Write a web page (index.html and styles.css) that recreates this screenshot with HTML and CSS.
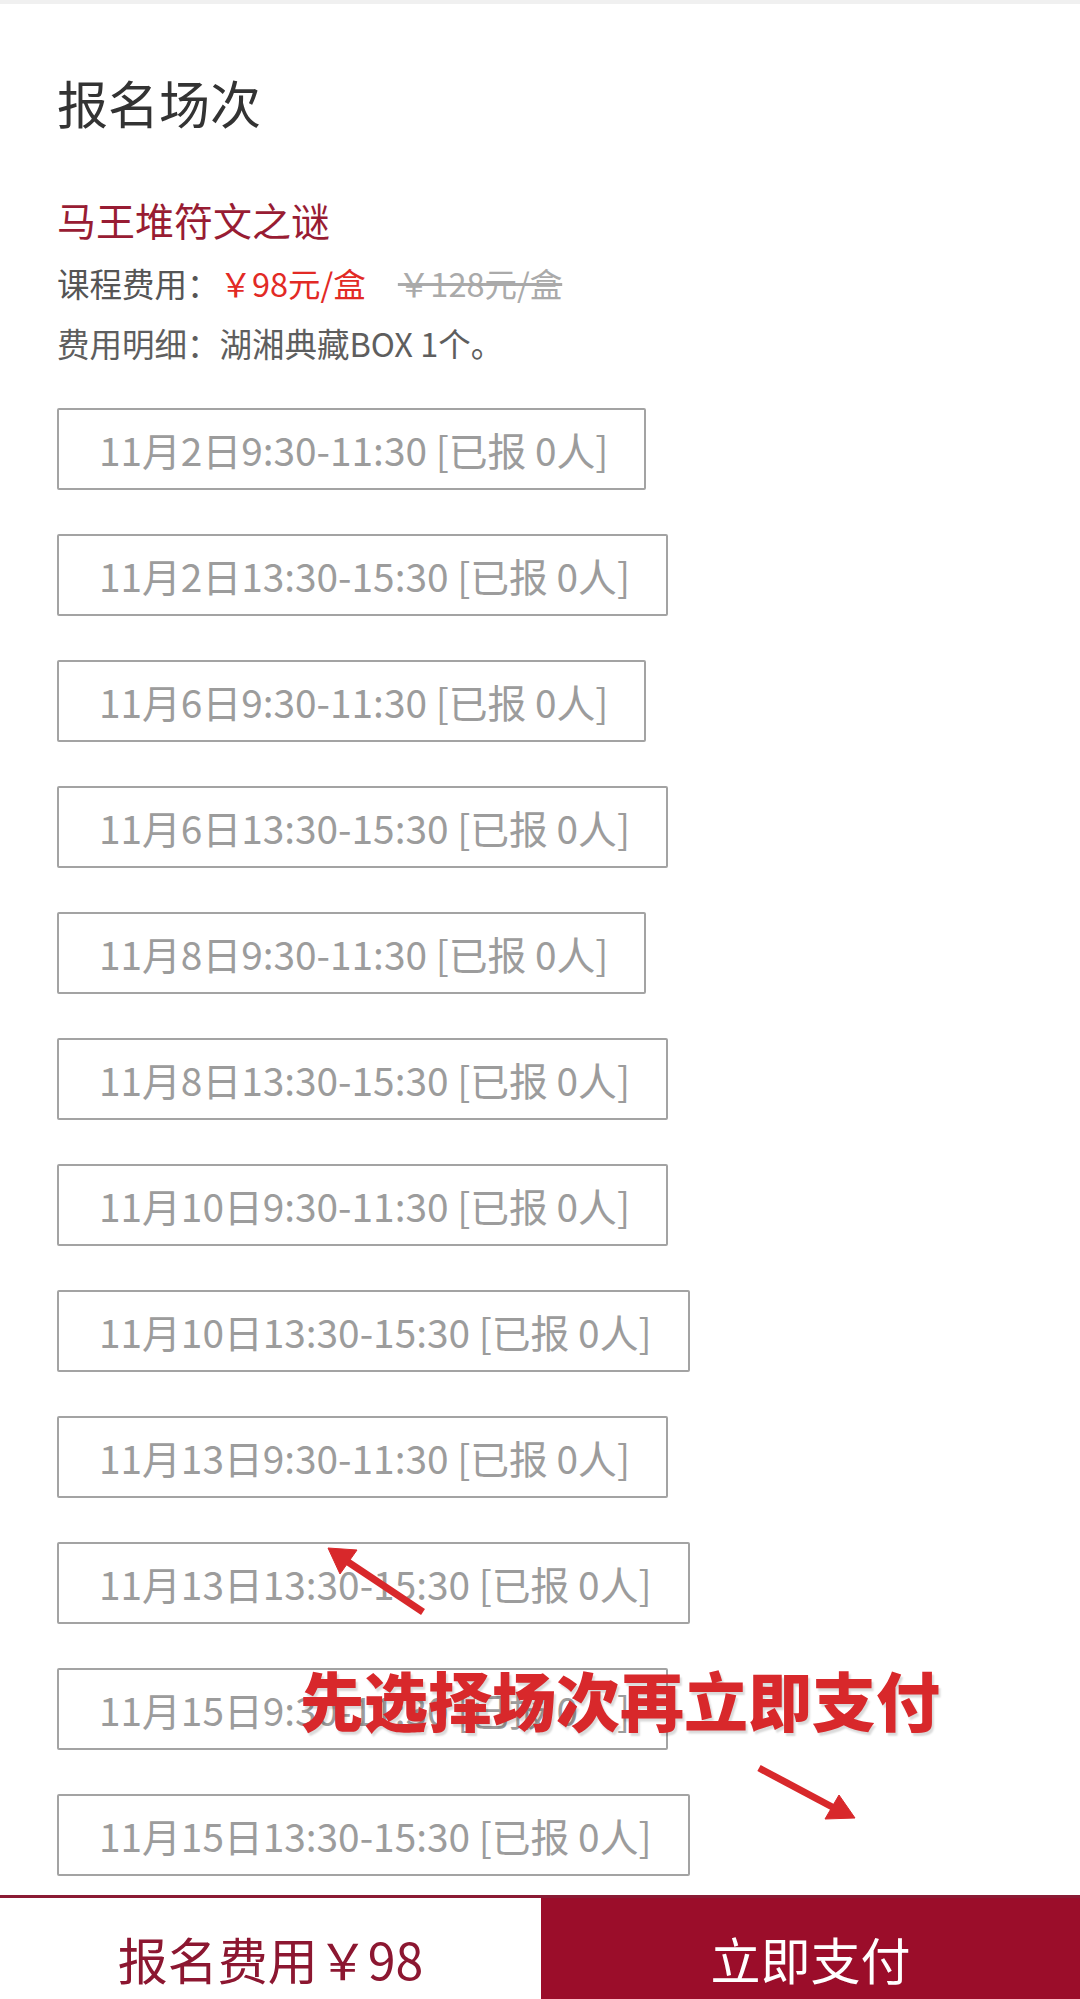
FILE: index.html
```html
<!DOCTYPE html>
<html lang="zh-CN">
<head>
<meta charset="utf-8">
<title>报名场次</title>
<link rel="stylesheet" href="styles.css">
</head>
<body>
<div class="page">
  <div class="topline"></div>
  <main class="content">
    <h1 class="title">报名场次</h1>
    <div class="course">马王堆符文之谜</div>
    <div class="row row-price">课程费用：<span class="price">￥98元/盒</span><span class="old">￥128元/盒</span></div>
    <div class="row row-detail">费用明细：湖湘典藏BOX 1个。</div>
    <div class="sessions">
      <div class="session">11月2日9:30-11:30 [已报 0人]</div>
      <div class="session">11月2日13:30-15:30 [已报 0人]</div>
      <div class="session">11月6日9:30-11:30 [已报 0人]</div>
      <div class="session">11月6日13:30-15:30 [已报 0人]</div>
      <div class="session">11月8日9:30-11:30 [已报 0人]</div>
      <div class="session">11月8日13:30-15:30 [已报 0人]</div>
      <div class="session">11月10日9:30-11:30 [已报 0人]</div>
      <div class="session">11月10日13:30-15:30 [已报 0人]</div>
      <div class="session">11月13日9:30-11:30 [已报 0人]</div>
      <div class="session">11月13日13:30-15:30 [已报 0人]</div>
      <div class="session">11月15日9:30-11:30 [已报 0人]</div>
      <div class="session">11月15日13:30-15:30 [已报 0人]</div>
    </div>
  </main>
  <footer class="bar">
    <div class="fee">报名费用￥98</div>
    <div class="pay">立即支付</div>
  </footer>

  <div class="note">先选择场次再立即支付</div>
  <svg class="arrows" width="1080" height="1999" viewBox="0 0 1080 1999">
    <g fill="#d8282b" stroke="#d8282b">
      <line x1="423" y1="1612" x2="345" y2="1560" stroke-width="7"/>
      <polygon points="328,1548 357,1550 340,1574" stroke-width="1"/>
      <line x1="759" y1="1768" x2="836" y2="1809" stroke-width="7"/>
      <polygon points="855,1818 839,1795 825,1819" stroke-width="1"/>
    </g>
  </svg>
</div>
</body>
</html>
```

FILE: styles.css
```css
html, body {
  margin: 0;
  padding: 0;
  background: #ffffff;
}

body {
  font-family: "Noto Sans CJK SC", "Noto Sans", sans-serif;
  color: #333333;
}

.page {
  position: relative;
  width: 1080px;
  height: 1999px;
  overflow: hidden;
  display: flex;
  flex-direction: column;
}

.topline {
  height: 4px;
  background: #f0f0f0;
}

.content {
  padding: 0 57px;
  flex: 1;
}

.title {
  margin: 68px 0 0;
  font-size: 51px;
  font-weight: 400;
  line-height: 60px;
  color: #333333;
}

.course {
  margin-top: 57px;
  font-size: 39px;
  line-height: 60px;
  color: #981c33;
}

.row {
  font-size: 32.5px;
  line-height: 60px;
  color: #555555;
}

.row-price {
  margin-top: 4px;
}

.row-detail {
  color: #5e5e5e;
}

.price {
  color: #e22a25;
}

.old {
  margin-left: 32px;
  color: #aaaaaa;
  text-decoration: line-through;
}

.sessions {
  margin-top: 35px;
  display: flex;
  flex-direction: column;
  align-items: flex-start;
  gap: 44px;
}

.session {
  height: 78px;
  line-height: 78px;
  padding: 0 36px 0 40px;
  border: 2px solid #a3a3a3;
  border-radius: 2px;
  font-size: 38.8px;
  color: #9c9c9c;
  white-space: nowrap;
}

.bar {
  height: 101px;
  border-top: 3px solid #8a1b34;
  display: flex;
  flex-shrink: 0;
}

.fee {
  width: 541px;
  background: #ffffff;
  color: #8c1731;
  font-size: 50px;
  line-height: 60px;
  text-align: center;
  padding-top: 30px;
  box-sizing: border-box;
}

.pay {
  flex: 1;
  background: #9b0d2a;
  color: #ffffff;
  font-size: 50px;
  line-height: 60px;
  text-align: center;
  padding-top: 30px;
  box-sizing: border-box;
}

.note {
  position: absolute;
  left: 300px;
  top: 1660px;
  font-size: 64px;
  line-height: 76px;
  font-weight: 900;
  color: #d8282b;
  white-space: nowrap;
  text-shadow: 2px 3px 2px rgba(0, 0, 0, 0.15);
}

.arrows {
  position: absolute;
  left: 0;
  top: 0;
  pointer-events: none;
}
```
